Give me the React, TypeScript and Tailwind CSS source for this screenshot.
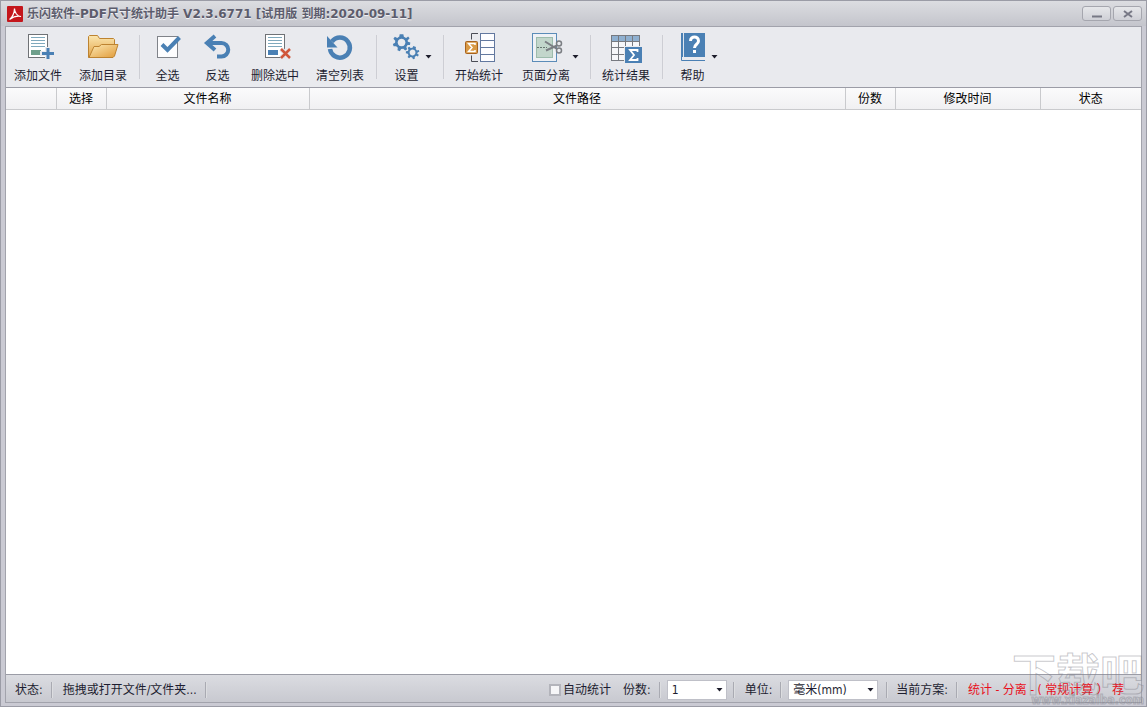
import { useState } from "react";
import type { ReactNode } from "react";
import clsx from "clsx";

const FileSheet = ({ block }: { block: string }) => (
  <>
    <rect x="6.5" y="3.5" width="19" height="23" fill="#fff" stroke="#6f7276" />
    <path d="M9 6.5h14M9 9.5h14M9 12.5h14M9 15.5h14" stroke="#7fa9bd" />
    <rect x="9" y="19" width="10" height="5" fill={block} />
  </>
);

const GEAR =
  "M0-9L2-9 2.6-6.2 5-5 7.2-6.6 8.8-4.6 6.6-2.2 7-0.8 9.6 0 9.2 2.6 6.6 2.6 5.2 4.9 6.2 7.4 4 8.8 2 6.8-0.4 7-1.8 9.4-4.4 8.4-4 5.6-5.8 4-8.6 4.2-9.4 1.6-7 0.2-6.8-1.8-8.8-4-7.2-6.2-4.6-5-2.4-6.4-2-9z";

const icons: Record<string, ReactNode> = {
  addFile: (
    <>
      <FileSheet block="#6fa08c" />
      <path d="M18 22.5h14M25.5 16v13" stroke="#e9eaee" strokeWidth="5" />
      <path d="M20 22.5h12M26 17v11" stroke="#4a80b4" strokeWidth="3" />
    </>
  ),
  folder: (
    <>
      <defs>
        <linearGradient id="folderBack" x1="0" y1="0" x2="0" y2="1">
          <stop offset="0" stopColor="#fbe6ae" />
          <stop offset="1" stopColor="#e2a246" />
        </linearGradient>
        <linearGradient id="folderFront" x1="0" y1="0" x2="1" y2="1">
          <stop offset="0" stopColor="#fdeab5" />
          <stop offset="1" stopColor="#e09a38" />
        </linearGradient>
      </defs>
      <path d="M1.5 26.5V5.5l1-1h8l2 3h14l1 1v7l-4 11z" fill="url(#folderBack)" stroke="#bd8330" />
      <path d="M2 26.5l5-11h5l2.5-2h16.5l-3.5 11.5-1.5 1.5z" fill="url(#folderFront)" stroke="#bd8330" />
    </>
  ),
  check: (
    <>
      <rect x="6.5" y="5.5" width="20" height="21" fill="#fdfdfe" stroke="#808389" />
      <path d="M11 13.5l5.5 5.5L28.5 6.5" fill="none" stroke="#4a80b4" strokeWidth="4" />
    </>
  ),
  invert: (
    <path
      d="M14 5L6 12l8 7M7 12h13.5a6.5 6.5 0 0 1 0 13.5H16"
      fill="none"
      stroke="#4a80b4"
      strokeWidth="4"
    />
  ),
  remove: (
    <>
      <FileSheet block="#4a80b4" />
      <path d="M22 18l9 9M31 18l-9 9" stroke="#e9eaee" strokeWidth="5" />
      <path d="M22 18l9 9M31 18l-9 9" stroke="#d0583c" strokeWidth="2.5" />
    </>
  ),
  clear: (
    <>
      <path d="M8 10.5A10 10 0 1 1 6 18" fill="none" stroke="#4a80b4" strokeWidth="4.5" />
      <path d="M3 5v11.5h10.5z" fill="#4a80b4" />
    </>
  ),
  gears: (
    <>
      <path
        fillRule="evenodd"
        fill="#4a80b4"
        transform="translate(11.5 11.5) scale(.92)"
        d={GEAR + "M0-4.2a4.2 4.2 0 1 0 .1 0z"}
      />
      <path
        fillRule="evenodd"
        fill="#4a80b4"
        transform="translate(22.5 21.5) rotate(20) scale(.7)"
        d={GEAR + "M0-4.2a4.2 4.2 0 1 0 .1 0z"}
      />
    </>
  ),
  start: (
    <>
      <rect x="17.5" y="2.5" width="14" height="28" fill="#fdfdff" stroke="#62789f" />
      <path d="M18 9.5h13M18 16.5h13M18 23.5h13" stroke="#62789f" />
      <path d="M15 2.5H8.5v6M15 30.5H8.5v-6" fill="none" stroke="#4b4d55" />
      <rect x="2.5" y="10.5" width="12" height="12" rx="1" fill="#d99a45" stroke="#a8621d" />
      <path d="M12 14v-1.5H5.5l3.5 4-3.5 4H12V19" fill="none" stroke="#fff" strokeWidth="1.5" />
    </>
  ),
  split: (
    <>
      <rect x="2.5" y="2.5" width="24" height="28" fill="#eef1f5" stroke="#5b8cb8" />
      <rect x="6.5" y="6.5" width="16" height="20" fill="#c2d6cb" stroke="#9dbcac" />
      <path d="M7 16.5h10" stroke="#66766f" strokeDasharray="2 1" />
      <path d="M15 10.5l12 7.5M16 19.5l11-5" stroke="#7b7e83" strokeWidth="2" />
      <g fill="#e9eaee" stroke="#7b7e83" strokeWidth="1.5">
        <circle cx="29" cy="12.5" r="2.5" />
        <circle cx="29" cy="19.5" r="2.5" />
      </g>
    </>
  ),
  result: (
    <>
      <rect x="1.5" y="4.5" width="28" height="25" fill="#f6f7fa" stroke="#777a80" />
      <rect x="2" y="5" width="27" height="5" fill="#8fb0d0" />
      <path d="M2 10.5h27M2 16.5h27M2 23.5h27M8.5 5v24M15.5 5v24M22.5 5v24" stroke="#777a80" />
      <rect x="14" y="15" width="18" height="18" fill="#e9eaee" />
      <rect x="15" y="16" width="17" height="16" fill="#4a80b4" />
      <path d="M27.5 21v-2H20l4 5-4 5h7.5v-2" fill="none" stroke="#fff" strokeWidth="1.8" />
    </>
  ),
  help: (
    <>
      <path d="M5 2h24v24H5z" fill="#4a80b4" />
      <rect x="7" y="2" width="1" height="24" fill="#dfe6ef" />
      <path d="M5.5 26v3.5H29" fill="none" stroke="#4a80b4" />
      <path d="M14.5 10c0-5.5 8-5.5 8 0 0 3.5-4 3-4 7" fill="none" stroke="#fff" strokeWidth="3" />
      <rect x="17" y="19" width="3" height="3" fill="#fff" />
    </>
  ),
};

const toolGroups = [
  [
    { label: "添加文件", icon: "addFile" },
    { label: "添加目录", icon: "folder" },
  ],
  [
    { label: "全选", icon: "check" },
    { label: "反选", icon: "invert" },
    { label: "删除选中", icon: "remove" },
    { label: "清空列表", icon: "clear" },
  ],
  [{ label: "设置", icon: "gears", menu: true }],
  [
    { label: "开始统计", icon: "start" },
    { label: "页面分离", icon: "split", menu: true },
  ],
  [{ label: "统计结果", icon: "result" }],
  [{ label: "帮助", icon: "help", menu: true }],
];

const columns = [
  { title: "", width: "w-[50px]" },
  { title: "选择", width: "w-[50px]" },
  { title: "文件名称", width: "w-[203px]" },
  { title: "文件路径", width: "" },
  { title: "份数", width: "w-[50px]" },
  { title: "修改时间", width: "w-[145px]" },
  { title: "状态", width: "w-[101px]" },
];

const Caret = ({ className }: { className?: string }) => (
  <svg viewBox="0 0 7 4" className={clsx("w-[7px] h-1", className)} fill="#1d1d2b">
    <path d="M0.5 0h6L3.5 3.5z" />
  </svg>
);

const ToolButton = ({ label, icon, menu }: { label: string; icon: string; menu?: boolean }) => (
  <button
    aria-haspopup={menu ? "menu" : undefined}
    className={clsx(
      "flex items-center shrink-0 hover:bg-white/50",
      menu ? "pl-2.5 pr-[7px] gap-0.5" : "px-2"
    )}
  >
    <span className="flex flex-col items-center min-w-8 pt-0.5 gap-0.5">
      <svg viewBox="0 0 33 33" className="w-[33px] h-[33px]">
        {icons[icon]}
      </svg>
      <span className="leading-5">{label}</span>
    </span>
    {menu && <Caret />}
  </button>
);

const Divider = ({ className }: { className?: string }) => (
  <span className={clsx("w-px shrink-0 border-r border-white/60 box-content", className)} />
);

const StatusSelect = ({
  id,
  options,
  className,
}: {
  id: string;
  options: string[];
  className: string;
}) => (
  <span className={clsx("relative shrink-0", className)}>
    <select
      id={id}
      className="w-full h-5 appearance-none bg-white border border-[#bfc0c8] pl-1 pr-4 outline-none"
    >
      {options.map((option) => (
        <option key={option}>{option}</option>
      ))}
    </select>
    <Caret className="absolute right-1 top-2 pointer-events-none" />
  </span>
);

const App = () => {
  const [auto, setAuto] = useState(false);

  return (
    <div className="relative min-h-screen flex flex-col overflow-hidden border border-[#9b9ca6] bg-[#cacad3] px-1 pb-[3px] text-xs text-[#1d1d30] font-['DejaVu_Sans_Condensed','Noto_Sans_CJK_SC',sans-serif]">
      {/* Title bar */}
      <header className="-mx-1 pl-1.5 pr-1 h-[25px] shrink-0 flex items-center bg-linear-to-b from-[#dcdde1] to-[#c4c5cc]">
        <svg viewBox="0 0 16 16" className="size-4 mr-1">
          <rect width="16" height="16" rx="1" fill="#c4161c" />
          <path
            d="M2.5 13.5C5 12 7.5 7 7.5 2.5c0 4 3 8 6.5 8-3.5-1-8 .5-11.5 3z"
            fill="none"
            stroke="#fff"
            strokeWidth="1.2"
          />
        </svg>
        <h1 className="font-bold text-[#5c5c6c] font-['DejaVu_Sans','Noto_Sans_CJK_SC',sans-serif] [text-shadow:0_1px_0_#f0f0f4]">
          乐闪软件-PDF尺寸统计助手 V2.3.6771 [试用版 到期:2020-09-11]
        </h1>
        <div className="ml-auto flex gap-0.5">
          <button
            aria-label="最小化"
            className="w-[29px] h-[15px] flex justify-center items-center rounded-[3px] border border-[#a5a6ae] bg-linear-to-b from-[#e6e7ea] to-[#cfd0d6]"
          >
            <svg viewBox="0 0 10 8" className="w-2.5 h-2">
              <path d="M0 6.5h10" stroke="#777885" strokeWidth="2" />
            </svg>
          </button>
          <button
            aria-label="关闭"
            className="w-[29px] h-[15px] flex justify-center items-center rounded-[3px] border border-[#a5a6ae] bg-linear-to-b from-[#e6e7ea] to-[#cfd0d6]"
          >
            <svg viewBox="0 0 10 8" className="w-2.5 h-2">
              <path d="M1 1l8 6M9 1L1 7" stroke="#777885" strokeWidth="2" />
            </svg>
          </button>
        </div>
      </header>

      <main className="flex-1 flex flex-col border border-[#a2a3ac]">
        {/* Toolbar */}
        <nav className="h-[60px] shrink-0 flex items-stretch bg-[#e9eaee]">
          {toolGroups.map((group, index) => (
            <div key={index} className="flex">
              {index > 0 && <Divider className="ml-1 mr-0.5 my-2 bg-[#cdced4]" />}
              <div className="flex gap-px">
                {group.map((tool) => (
                  <ToolButton key={tool.label} {...tool} />
                ))}
              </div>
            </div>
          ))}
        </nav>

        {/* File list */}
        <div className="flex-1 bg-white border-y border-[#9b9ca6]">
          <table className="w-full table-fixed">
            <thead>
              <tr className="h-[21px] bg-linear-to-b from-[#fbfbfc] to-[#f0f0f2]">
                {columns.map((column) => (
                  <th
                    key={column.title}
                    className={clsx(
                      "p-0 pt-0.5 font-normal leading-[18px] text-black border-b border-r border-[#c9cacd] last:border-r-0",
                      column.width
                    )}
                  >
                    {column.title}
                  </th>
                ))}
              </tr>
            </thead>
            <tbody />
          </table>
        </div>

        {/* Status bar */}
        <footer className="h-[27px] shrink-0 flex items-center whitespace-nowrap pt-[3px] pl-[9px] bg-linear-to-b from-[#dbdce1] to-[#c8c9d0]">
          <span>状态:</span>
          <Divider className="h-4 ml-2 mr-2.5 bg-[#a9aab2]" />
          <span>拖拽或打开文件/文件夹...</span>
          <Divider className="h-4 ml-2 bg-[#a9aab2]" />

          <div className="ml-auto flex items-center">
            <label className="flex items-center gap-0.5 mr-3">
              <input
                type="checkbox"
                checked={auto}
                onChange={(e) => setAuto(e.target.checked)}
                className="size-3 appearance-none border-2 border-[#b3b4bb] bg-[#f6f6f8] checked:bg-[#4a80b4]"
              />
              自动统计
            </label>
            <label htmlFor="copies">份数:</label>
            <Divider className="h-4 ml-2 mr-1.5 bg-[#a9aab2]" />
            <StatusSelect id="copies" options={["1", "2", "3"]} className="w-[60px]" />
            <Divider className="h-4 ml-1.5 mr-2.5 bg-[#a9aab2]" />
            <label htmlFor="unit">单位:</label>
            <Divider className="h-4 ml-2 mr-1.5 bg-[#a9aab2]" />
            <StatusSelect id="unit" options={["毫米(mm)", "厘米(cm)"]} className="w-[90px]" />
            <Divider className="h-4 ml-2 mr-2 bg-[#a9aab2]" />
            <span>当前方案:</span>
            <Divider className="h-4 ml-2 mr-2.5 bg-[#a9aab2]" />
            <span className="w-[173px] overflow-hidden text-[#e8101c]">
              统计 - 分离 - ( 常规计算 ）&nbsp;荐
            </span>
          </div>
        </footer>
      </main>

      {/* Site mark */}
      <div className="absolute right-0.5 bottom-0 pointer-events-none flex flex-col items-end font-['Noto_Sans_CJK_SC',sans-serif] font-bold text-transparent">
        <span className="text-[44px] leading-11 [-webkit-text-stroke:1px_#80808a70]">下载吧</span>
        <span className="text-xs leading-3 font-['DejaVu_Sans_Condensed',sans-serif] [-webkit-text-stroke:1px_#80808a70]">
          www.xiazaiba.com
        </span>
      </div>
    </div>
  );
};

export default App;
